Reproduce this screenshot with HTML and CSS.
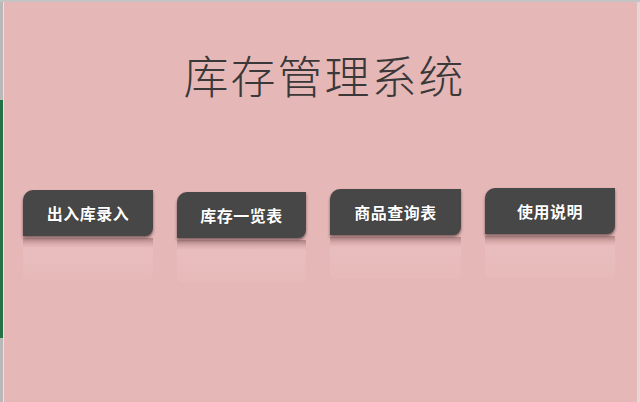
FILE: index.html
```html
<!DOCTYPE html>
<html lang="zh-CN">
<head>
<meta charset="utf-8">
<title>库存管理系统</title>
<link rel="stylesheet" href="styles.css">
</head>
<body>
<div class="window">
  <div class="rail">
    <div class="rail-top"></div>
    <div class="rail-green"></div>
    <div class="rail-bottom"></div>
  </div>
  <main class="sheet">
    <h1 class="title">库存管理系统</h1>
    <div class="buttons">
      <div class="item item-1">
        <div class="btn">出入库录入</div>
        <div class="reflect" aria-hidden="true"></div>
      </div>
      <div class="item item-2">
        <div class="btn">库存一览表</div>
        <div class="reflect" aria-hidden="true"></div>
      </div>
      <div class="item item-3">
        <div class="btn">商品查询表</div>
        <div class="reflect" aria-hidden="true"></div>
      </div>
      <div class="item item-4">
        <div class="btn">使用说明</div>
        <div class="reflect" aria-hidden="true"></div>
      </div>
    </div>
  </main>
  <div class="edge-right"></div>
</div>
</body>
</html>
```

FILE: styles.css
```css
html, body {
  margin: 0;
  padding: 0;
}
body {
  width: 640px;
  height: 402px;
  overflow: hidden;
  font-family: "Noto Sans CJK SC", "Noto Sans", sans-serif;
  background: #e6b7b7;
}
.window {
  display: flex;
  width: 640px;
  height: 402px;
  border-top: 2px solid #c4c4c4;
  box-sizing: border-box;
}
.rail {
  width: 3px;
  display: flex;
  flex-direction: column;
  border-right: 1px solid #efe0e0;
}
.rail-top {
  height: 98px;
  background: #b9b9b9;
}
.rail-green {
  height: 238px;
  background: #217346;
}
.rail-bottom {
  flex: 1;
  background: #b9b9b9;
}
.sheet {
  flex: 1;
  background: #e6b7b7;
  padding-top: 50px;
  padding-left: 19px;
}
.title {
  margin: 0;
  font-size: 45px;
  line-height: 46px;
  font-weight: 300;
  color: #3a3838;
  text-align: center;
  padding-right: 10px;
  letter-spacing: 2px;
}
.buttons {
  display: flex;
  gap: 24px;
  margin-top: 92px;
  align-items: flex-start;
}
.item {
  width: 130px;
  display: flex;
  flex-direction: column;
}
.item-2 { margin-top: 2px; width: 129px; }
.item-3 { margin-top: -1px; width: 131px; }
.item-4 { margin-top: -2px; }
.btn {
  height: 46px;
  background: #474747;
  color: #ffffff;
  border-radius: 10px 0 8px 0;
  box-shadow: 0 2px 3px rgba(40, 20, 20, 0.55);
  font-size: 16px;
  font-weight: bold;
  display: flex;
  align-items: center;
  justify-content: center;
  letter-spacing: 0.5px;
  text-shadow: 0 0 1px rgba(0, 0, 0, 0.5);
}
.reflect {
  height: 42px;
  margin-top: 2px;
  border-radius: 0 0 6px 6px;
  background: linear-gradient(to bottom,
    rgba(110, 70, 70, 0.45) 0px,
    rgba(150, 110, 110, 0.15) 6px,
    rgba(255, 235, 235, 0.12) 10px,
    rgba(255, 235, 235, 0.06) 100%);
}
.edge-right {
  width: 3px;
  background: #ecd4d4;
  border-left: 1px solid #dcbcbc;
}
```
